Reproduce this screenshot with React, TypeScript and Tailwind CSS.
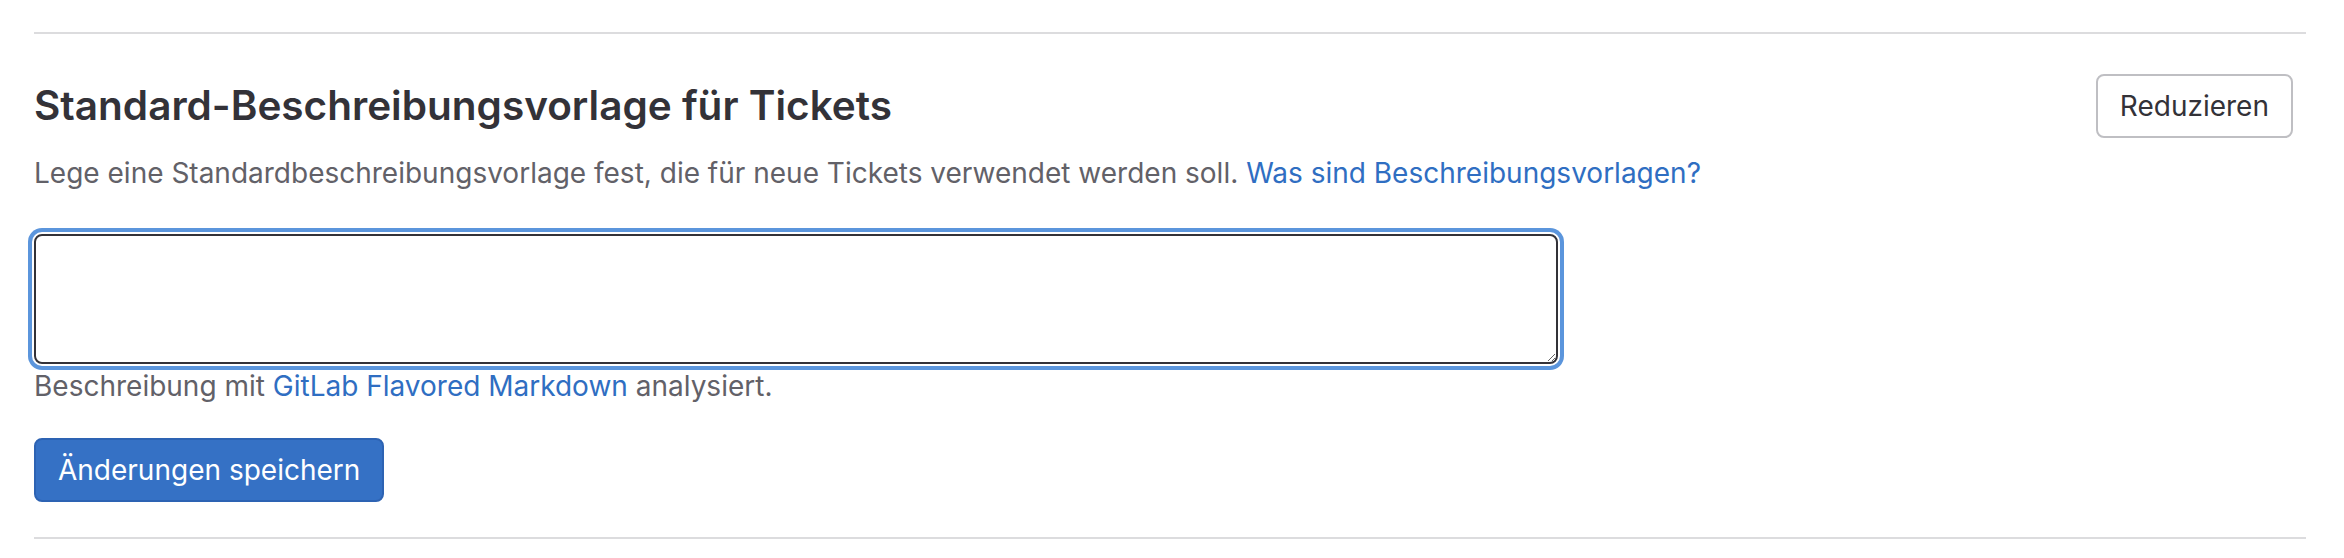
export default function App() {
  return (
    <div className="min-h-screen w-full bg-white pt-[32px] pl-[34px] pr-[38px] font-['Inter',sans-serif]">
      <div className="h-[2px] w-full bg-[#dcdcde]" />
      <section className="pt-[40px]">
        <div className="flex h-[64px] items-center justify-between">
          <h2 className="text-[40.5px] leading-[56px] font-semibold text-[#333238]">
            Standard-Beschreibungsvorlage für Tickets
          </h2>
          <button
            type="button"
            className="mr-[13px] h-[64px] rounded-[8px] border-2 border-[#bfbfc3] bg-white px-[22px] text-[28px] leading-[40px] text-[#333238]"
          >
            Reduzieren
          </button>
        </div>
        <p className="mt-[15px] text-[28px] leading-[40px] text-[#626168]">
          Lege eine Standardbeschreibungsvorlage fest, die für neue Tickets verwendet werden soll.{" "}
          <a href="#" className="text-[#2f6ec2]">
            Was sind Beschreibungsvorlagen?
          </a>
        </p>
        <div className="mt-[41px]">
          <textarea
            className="block h-[130px] w-[1524px] resize-y rounded-[8px] border-2 border-[#333238] bg-white px-[20px] py-[12px] text-[28px] text-[#333238] shadow-[0_0_0_2px_#ffffff,0_0_0_6px_#5b95dc] outline-none"
          />
          <p className="mt-[2px] text-[28px] leading-[40px] text-[#626168]">
            Beschreibung mit{" "}
            <a href="#" className="text-[#2f6ec2]">
              GitLab Flavored Markdown
            </a>{" "}
            analysiert.
          </p>
        </div>
        <button
          type="button"
          className="mt-[32px] h-[64px] rounded-[8px] border-2 border-[#2d63b3] bg-[#3571c5] px-[22px] text-[28px] leading-[40px] text-white"
        >
          Änderungen speichern
        </button>
      </section>
      <div className="mt-[35px] h-[2px] w-full bg-[#dcdcde]" />
    </div>
  );
}
